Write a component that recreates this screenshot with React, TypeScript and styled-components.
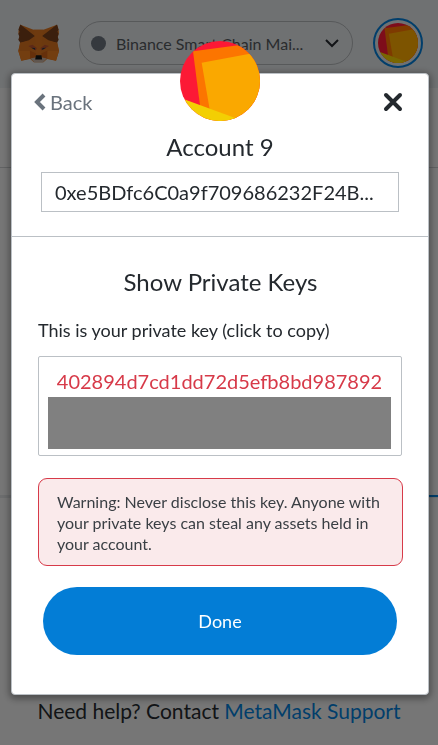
import React from "react";
import styled, { createGlobalStyle } from "styled-components";

const GlobalStyle = createGlobalStyle`
  * { box-sizing: border-box; }
  body { margin: 0; background: #fff; font-family: Lato, sans-serif; color: #24292e; }
  button, input { font-family: inherit; color: inherit; }
  p, h1, h2 { margin: 0; font-weight: 400; }
`;

const Page = styled.div`
  display: flex;
  flex-direction: column;
  min-height: 100vh;
  background: #ededed;
`;

const Header = styled.header`
  display: flex;
  align-items: center;
  gap: 20px;
  height: 88px;
  padding: 0 15px 2px 18px;
  background: #dfe2e4;
`;

const NetworkButton = styled.button`
  display: flex;
  flex: 1;
  align-items: center;
  min-width: 0;
  height: 44px;
  padding: 0 13px 0 11px;
  border: 1px solid #aeb2b5;
  border-radius: 22px;
  background: none;
  font-size: 16px;
`;

const NetworkDot = styled.span`
  flex: none;
  width: 15px;
  height: 15px;
  margin-right: 10px;
  border-radius: 50%;
  background: #6a737d;
`;

const NetworkName = styled.span`
  flex: 1;
  overflow: hidden;
  white-space: nowrap;
  text-align: left;
  color: #53585d;
`;

const AccountButton = styled.button`
  display: flex;
  flex: none;
  align-items: center;
  justify-content: center;
  width: 50px;
  height: 50px;
  padding: 0;
  border: 2px solid #037dd6;
  border-radius: 50%;
  background: none;
`;

const MenuBar = styled.div`
  height: 80px;
  border-bottom: 1px solid #c4c6c8;
`;

const Balance = styled.div`
  height: 327px;
`;

const Tabs = styled.div`
  display: grid;
  grid-template-columns: 1fr 1fr;
  border-bottom: 1px solid #d8dadc;
`;

const Tab = styled.span<{ $active?: boolean }>`
  height: 2px;
  background: ${(p) => (p.$active ? "#037dd6" : "#d8dadc")};
`;

const Help = styled.footer`
  margin-top: auto;
  padding-bottom: 20px;
  text-align: center;
  font-size: 21px;
  line-height: 28px;
  color: #24292e;
`;

const HelpLink = styled.a`
  color: #037dd6;
  text-decoration: none;
`;

const Overlay = styled.div`
  position: fixed;
  inset: 0;
  padding: 73px 9px 0 11px;
  background: rgba(0, 0, 0, 0.5);
`;

const Modal = styled.section`
  display: flex;
  flex-direction: column;
  border: 1px solid #bbc0c5;
  border-radius: 4px;
  background: #fff;
  box-shadow: 0 2px 7px 2px rgba(0, 0, 0, 0.35);
`;

const ModalTop = styled.div`
  display: grid;
  grid-template-columns: 1fr 80px 1fr;
  padding: 0 23px 0 22px;
  height: 48px;
`;

const BackButton = styled.button`
  display: flex;
  align-items: center;
  justify-self: start;
  gap: 4px;
  height: 24px;
  margin-top: 16px;
  padding: 0;
  border: 0;
  background: none;
  font-size: 20px;
  line-height: 24px;
  color: #6a737d;
`;

const ModalAvatar = styled.div`
  height: 80px;
  margin-top: -33px;
`;

const CloseButton = styled.button`
  display: flex;
  justify-self: end;
  height: 20px;
  margin-top: 18px;
  padding: 0;
  border: 0;
  background: none;
`;

const AccountPanel = styled.div`
  display: flex;
  flex-direction: column;
  gap: 9px;
  padding: 9px 29px 24px;
  border-bottom: 1px solid #bbc0c5;
`;

const AccountName = styled.h1`
  font-size: 24px;
  line-height: 32px;
  text-align: center;
`;

const AddressField = styled.input`
  width: 100%;
  height: 40px;
  padding: 0 13px;
  border: 1px solid #bbc0c5;
  background: #fff;
  font-size: 20px;
  text-overflow: ellipsis;
  outline: 0;
`;

const KeyPanel = styled.div`
  display: flex;
  flex-direction: column;
  padding: 29px 25px 39px 26px;
`;

const Title = styled.h2`
  margin-bottom: 20px;
  font-size: 24px;
  line-height: 32px;
  text-align: center;
`;

const KeyLabel = styled.p`
  margin-bottom: 14px;
  font-size: 18px;
  line-height: 24px;
`;

const KeyButton = styled.button`
  display: flex;
  flex-direction: column;
  align-items: center;
  height: 100px;
  margin-right: 1px;
  padding: 10px 10px 6px 9px;
  border: 1px solid #bbc0c5;
  border-radius: 2px;
  background: #fff;
  font-size: 20px;
  line-height: 28px;
`;

const KeyText = styled.span`
  margin-bottom: 2px;
  color: #d73a49;
`;

const Redaction = styled.span`
  align-self: stretch;
  flex: 1;
  background: #808080;
`;

const Warning = styled.p`
  margin-top: 22px;
  padding: 12px 18px 11px;
  border: 1px solid #d73a49;
  border-radius: 9px;
  background: #faeaeb;
  font-size: 16px;
  line-height: 21px;
  color: #3a3f44;
`;

const DoneButton = styled.button`
  height: 68px;
  margin: 21px 6px 0 5px;
  border: 0;
  border-radius: 34px;
  background: #037dd6;
  color: #fff;
  font-size: 18px;
`;

const FoxLogo = () => (
  <svg width="41" height="39" viewBox="53 70 124 117" aria-label="MetaMask">
    <path d="M60 72 100 87H130L171 72 177 94 171 121 177 151 168 181 141 175 130 185H101L90 175 63 181 54 151 60 121 54 94Z" fill="#d9731f" />
    <path d="M60 71 104 106 86 119 60 126 54 117 57 108 54 99 58 93 54 87Z" fill="#763e1a" />
    <path d="M171 71 126 106 145 119 171 126 176 117 173 108 176 99 172 93 176 87Z" fill="#763e1a" />
    <path d="M60 126 86 121 90 151H54Z M171 126 145 121 141 151H177Z" fill="#d9731f" />
    <path d="M54 151H90L89 174 63 181Z M177 151H141L142 174 168 181Z" fill="#e67c20" />
    <path d="M104 106 100 87H130L126 106 124 160H107Z" fill="#dc751e" />
    <path d="M84 136 97 132 110 142 107 150Z M147 136 134 132 121 142 124 150Z" fill="#b8532f" />
    <path d="M93 141 104 142 105 148Z M138 141 127 142 126 148Z" fill="#233447" />
    <path d="M89 150 108 159 103 175 90 174Z M142 150 123 159 128 175 141 174Z" fill="#cd6116" />
    <path d="M91 174 105 171H126L140 174 128 186H103Z" fill="#c0ad9e" />
    <path d="M107 164H124L126 177H105Z" fill="#161616" />
  </svg>
);

const Jazzicon = ({ size, id }: { size: number; id: string }) => (
  <svg width={size} height={size} viewBox="0 0 240 240" aria-hidden="true">
    <clipPath id={id}><circle cx="120" cy="120" r="120" /></clipPath>
    <g clipPath={`url(#${id})`}>
      <rect width="240" height="240" fill="#fc1935" />
      <path d="M39 31 175 13 240 6V240H66Z" fill="#fc7500" />
      <path d="M65 65 240 33V240H95Z" fill="#faa800" />
      <path d="M0 170 180 236V240H0Z" fill="#f3cf03" />
    </g>
  </svg>
);

export default function App() {
  return (
    <>
      <GlobalStyle />
      <Page>
        <Header>
          <FoxLogo />
          <NetworkButton>
            <NetworkDot />
            <NetworkName>Binance Smart Chain Mai...</NetworkName>
            <svg width="14" height="9" viewBox="0 0 14 9" fill="none" stroke="#24292e" strokeWidth="2" aria-hidden="true">
              <path d="m1 1 6 6 6-6" />
            </svg>
          </NetworkButton>
          <AccountButton aria-label="Account menu">
            <Jazzicon size={40} id="menu-avatar" />
          </AccountButton>
        </Header>
        <MenuBar />
        <Balance />
        <Tabs>
          <Tab />
          <Tab $active />
        </Tabs>
        <Help>
          Need help? Contact <HelpLink href="#support">MetaMask Support</HelpLink>
        </Help>
      </Page>
      <Overlay>
        <Modal role="dialog" aria-modal="true" aria-labelledby="keys-title">
          <ModalTop>
            <BackButton>
              <svg width="12" height="18" viewBox="0 0 12 18" fill="none" stroke="#6a737d" strokeWidth="4" aria-hidden="true">
                <path d="M10 2 3 9l7 7" />
              </svg>
              Back
            </BackButton>
            <ModalAvatar><Jazzicon size={80} id="modal-avatar" /></ModalAvatar>
            <CloseButton aria-label="Close">
              <svg width="24" height="20" viewBox="0 0 24 20" fill="none" stroke="#24292e" strokeWidth="4" strokeLinecap="round" aria-hidden="true">
                <path d="m5 3 14 14M19 3 5 17" />
              </svg>
            </CloseButton>
          </ModalTop>
          <AccountPanel>
            <AccountName>Account 9</AccountName>
            <AddressField aria-label="Account address" readOnly value="0xe5BDfc6C0a9f709686232F24B..." />
          </AccountPanel>
          <KeyPanel>
            <Title id="keys-title">Show Private Keys</Title>
            <KeyLabel id="key-label">This is your private key (click to copy)</KeyLabel>
            <KeyButton aria-describedby="key-label">
              <KeyText>402894d7cd1dd72d5efb8bd987892</KeyText>
              <Redaction />
            </KeyButton>
            <Warning>
              Warning: Never disclose this key. Anyone with your private keys can steal any assets held in your account.
            </Warning>
            <DoneButton>Done</DoneButton>
          </KeyPanel>
        </Modal>
      </Overlay>
    </>
  );
}
